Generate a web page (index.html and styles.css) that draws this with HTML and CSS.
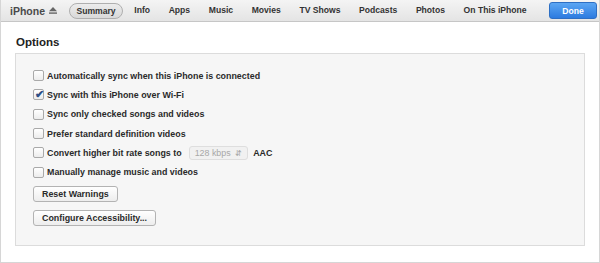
FILE: index.html
```html
<!DOCTYPE html>
<html lang="en">
<head>
    <meta charset="UTF-8">
    <title>iPhone Summary</title>
    <link rel="stylesheet" href="styles.css">
</head>
<body>
    <div class="window">
        <div class="toolbar">
            <div class="device">iPhone
                <svg class="eject" viewBox="0 0 8 7" fill="#666">
                    <path d="M4 0L8 4.2H0z"/>
                    <rect x="0" y="5.4" width="8" height="1.4"/>
                </svg>
            </div>
            <nav class="tabs">
                <span class="tab active">Summary</span>
                <span class="tab">Info</span>
                <span class="tab">Apps</span>
                <span class="tab">Music</span>
                <span class="tab">Movies</span>
                <span class="tab">TV Shows</span>
                <span class="tab">Podcasts</span>
                <span class="tab">Photos</span>
                <span class="tab">On This iPhone</span>
            </nav>
            <button class="done">Done</button>
        </div>
        <div class="content">
            <h1>Options</h1>
            <div class="panel">
                <label class="row"><span class="check"></span>Automatically sync when this iPhone is connected</label>
                <label class="row"><span class="check on"></span>Sync with this iPhone over Wi-Fi</label>
                <label class="row"><span class="check"></span>Sync only checked songs and videos</label>
                <label class="row"><span class="check"></span>Prefer standard definition videos</label>
                <label class="row"><span class="check"></span>Convert higher bit rate songs to
                    <span class="select">128 kbps <span class="arrows">&#8693;</span></span>
                    <span class="aac">AAC</span>
                </label>
                <label class="row"><span class="check"></span>Manually manage music and videos</label>
                <button class="btn">Reset Warnings</button>
                <button class="btn">Configure Accessibility...</button>
            </div>
        </div>
    </div>
</body>
</html>
```

FILE: styles.css
```css
* {
    margin: 0;
    padding: 0;
    box-sizing: border-box;
}
body {
    font-family: 'Liberation Sans', Arial, sans-serif;
    font-size: 10px;
    color: #222;
    background: #fff;
}
.window {
    width: 600px;
    height: 263px;
    border: 1px solid #d6d6d6;
    border-top: none;
    display: flex;
    flex-direction: column;
}
.toolbar {
    height: 22px;
    display: flex;
    align-items: center;
    padding: 0 2px 0 9px;
    background: linear-gradient(#f4f4f4, #e4e4e4);
    border-bottom: 1px solid #c6c6c6;
    font-weight: bold;
    font-size: 8.6px;
    color: #333;
    white-space: nowrap;
}
.toolbar > * {
    flex-shrink: 0;
}
.device {
    display: flex;
    align-items: center;
    gap: 4px;
    font-size: 10.5px;
    color: #4a4a4a;
    width: 59px;
}
.eject {
    width: 8px;
    height: 7px;
}
.tabs {
    display: flex;
    align-items: center;
    flex: 1;
}
.tab {
    padding: 2px 9.3px 3px;
}
.tab.active {
    width: 54px;
    height: 16px;
    padding: 2px 0 0;
    margin-right: 2px;
    text-align: center;
    background: linear-gradient(#ececec, #d9d9d9);
    border: 1px solid #afafaf;
    border-radius: 8px;
}
.done {
    width: 48px;
    height: 17px;
    border: 1px solid #2d6fc4;
    border-radius: 3px;
    background: linear-gradient(#5ba6f3, #2c7be0);
    color: #fff;
    font: bold 8.6px 'Liberation Sans', Arial, sans-serif;
}
.content {
    flex: 1;
    padding: 14px 14px 16px 14px;
}
h1 {
    font-size: 11.5px;
    font-weight: bold;
    margin: 0 0 5px 1px;
    color: #222;
}
.panel {
    height: 193px;
    background: #f6f6f6;
    border: 1px solid #dcdcdc;
    padding: 12px 17px;
    display: flex;
    flex-direction: column;
    align-items: flex-start;
}
.row {
    height: 19.3px;
    display: flex;
    align-items: center;
    font-size: 8.9px;
    font-weight: bold;
    color: #2a2a2a;
    white-space: nowrap;
}
.check {
    width: 11px;
    height: 11px;
    border: 1px solid #a9a9a9;
    border-radius: 2px;
    background: linear-gradient(#fff, #ececec);
    margin-right: 3px;
}
.check.on::after {
    content: '✔';
    display: block;
    font-size: 11px;
    line-height: 9px;
    color: #2e4f86;
    margin-left: 1px;
}
.select {
    margin-left: 7px;
    padding: 1px 5px;
    border: 1px solid #dedede;
    border-radius: 3px;
    background: #f1f1f1;
    color: #a8a8a8;
    font-weight: normal;
}
.arrows {
    font-size: 8px;
    margin-left: 2px;
}
.aac {
    margin-left: 5px;
}
.btn {
    margin-top: 4px;
    height: 16px;
    padding: 0 8px;
    border: 1px solid #b3b3b3;
    border-radius: 3px;
    background: linear-gradient(#fff, #ededed);
    font: bold 8.9px 'Liberation Sans', Arial, sans-serif;
    color: #2a2a2a;
}
.btn + .btn {
    margin-top: 8px;
}
```
